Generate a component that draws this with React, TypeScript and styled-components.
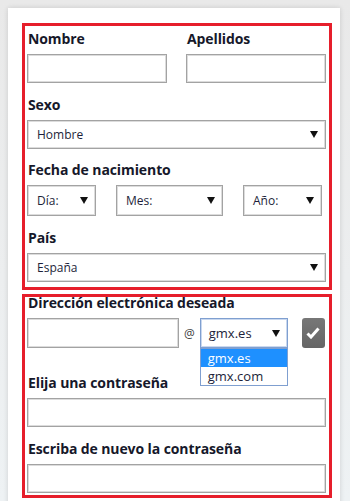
import React from "react";
import styled, { createGlobalStyle } from "styled-components";

const GlobalStyle = createGlobalStyle`
  html, body {
    margin: 0;
    padding: 0;
  }
  body {
    width: 350px;
    height: 501px;
    overflow: hidden;
    font-family: "Open Sans", "Noto Sans", sans-serif;
    background: linear-gradient(180deg, #e9e9e9 0%, #eceeef 55%, #eef2f4 100%);
  }
`;

const Page = styled.div`
  padding: 8px 10px 0 8px;
`;

const Card = styled.div`
  width: 332px;
  min-height: 500px;
  background: #fff;
  box-shadow: 0 0 5px rgba(0, 0, 0, 0.14);
  padding: 15px 8px 0 14px;
  box-sizing: border-box;
`;

const Section = styled.div<{ $pt: number; $pb: number; $mt?: number }>`
  border: 3px solid #e61e2b;
  padding: ${(p) => p.$pt}px 3px ${(p) => p.$pb}px 2px;
  margin-top: ${(p) => p.$mt ?? 0}px;
  position: relative;
`;

const Field = styled.div<{ $mt?: number }>`
  margin-top: ${(p) => p.$mt ?? 0}px;
`;

const Label = styled.div`
  font-size: 14px;
  line-height: 20px;
  font-weight: 700;
  color: #16182a;
  margin: 0 0 5px 1px;
  letter-spacing: -0.1px;
  white-space: nowrap;
`;

const Pair = styled.div`
  display: grid;
  grid-template-columns: 140px 140px;
  column-gap: 19px;
`;

const TextBox = styled.div<{ $w?: number; $h?: number }>`
  width: ${(p) => (p.$w ? `${p.$w}px` : "100%")};
  height: ${(p) => p.$h ?? 29}px;
  box-sizing: border-box;
  border: 1px solid #a3a3a3;
  box-shadow: inset 0 0 0 1px #dcdcdc;
  background: #fff;
`;

const Select = styled.div<{ $w?: number; $h?: number; $pl?: number; $focus?: boolean }>`
  width: ${(p) => (p.$w ? `${p.$w}px` : "100%")};
  height: ${(p) => p.$h ?? 29}px;
  box-sizing: border-box;
  border: 1px solid ${(p) => (p.$focus ? "#7f9fd0" : "#a3a3a3")};
  box-shadow: inset 0 0 0 1px ${(p) => (p.$focus ? "#c9d8ef" : "#dcdcdc")};
  background: #fff;
  display: flex;
  align-items: center;
  justify-content: space-between;
  padding: 0 7px 0 ${(p) => p.$pl ?? 9}px;
`;

const SelectText = styled.span<{ $size?: number }>`
  font-size: ${(p) => p.$size ?? 12}px;
  color: #1d1f3a;
`;

const DateRow = styled.div`
  display: flex;
  gap: 20px;
  align-items: center;
`;

const EmailRow = styled.div`
  display: flex;
  align-items: center;
  position: relative;
`;

const At = styled.span`
  font-size: 12px;
  color: #444;
  margin: 0 5px 0 5px;
`;

const DomainWrap = styled.div`
  position: relative;
`;

const DropList = styled.div`
  position: absolute;
  left: 0;
  top: 30px;
  width: 88px;
  box-sizing: border-box;
  border: 1px solid #7f9fd0;
  background: #fff;
  z-index: 2;
`;

const Option = styled.div<{ $active?: boolean }>`
  height: 18px;
  line-height: 18px;
  padding-left: 7px;
  font-size: 13px;
  color: ${(p) => (p.$active ? "#fff" : "#1d1f3a")};
  background: ${(p) => (p.$active ? "#1e90ff" : "#fff")};
`;

const CheckButton = styled.div`
  width: 23px;
  height: 30px;
  margin-left: 14px;
  border-radius: 3px;
  background: linear-gradient(180deg, #777 0%, #656565 100%);
  display: flex;
  align-items: center;
  justify-content: center;
`;

const Arrow = () => (
  <svg width="8" height="7" viewBox="0 0 8 7">
    <path d="M0 0 H8 L4 7 Z" fill="#111" />
  </svg>
);

const Check = () => (
  <svg width="14" height="12" viewBox="0 0 14 12">
    <path d="M1.5 6.5 L5 10 L12.5 1.5" fill="none" stroke="#fff" strokeWidth="3" />
  </svg>
);

export default function App() {
  return (
    <>
      <GlobalStyle />
      <Page>
        <Card>
          <Section $pt={3} $pb={5}>
            <Pair>
              <Field>
                <Label>Nombre</Label>
                <TextBox />
              </Field>
              <Field>
                <Label>Apellidos</Label>
                <TextBox />
              </Field>
            </Pair>
            <Field $mt={12}>
              <Label>Sexo</Label>
              <Select>
                <SelectText>Hombre</SelectText>
                <Arrow />
              </Select>
            </Field>
            <Field $mt={11}>
              <Label>Fecha de nacimiento</Label>
              <DateRow>
                <Select $w={69} $h={31}>
                  <SelectText>Día:</SelectText>
                  <Arrow />
                </Select>
                <Select $w={107} $h={31}>
                  <SelectText>Mes:</SelectText>
                  <Arrow />
                </Select>
                <Select $w={79} $h={31}>
                  <SelectText>Año:</SelectText>
                  <Arrow />
                </Select>
              </DateRow>
            </Field>
            <Field $mt={12}>
              <Label>País</Label>
              <Select>
                <SelectText>España</SelectText>
                <Arrow />
              </Select>
            </Field>
          </Section>

          <Section $pt={0} $pb={2} $mt={4}>
            <Field $mt={-4}>
              <Label>Dirección electrónica deseada</Label>
              <EmailRow>
                <TextBox $w={152} $h={30} />
                <At>@</At>
                <DomainWrap>
                  <Select $w={88} $h={30} $pl={8} $focus>
                    <SelectText $size={13}>gmx.es</SelectText>
                    <Arrow />
                  </Select>
                  <DropList>
                    <Option $active>gmx.es</Option>
                    <Option>gmx.com</Option>
                  </DropList>
                </DomainWrap>
                <CheckButton>
                  <Check />
                </CheckButton>
              </EmailRow>
            </Field>
            <Field $mt={25}>
              <Label>Elija una contraseña</Label>
              <TextBox />
            </Field>
            <Field $mt={12}>
              <Label>Escriba de nuevo la contraseña</Label>
              <TextBox />
            </Field>
          </Section>
        </Card>
      </Page>
    </>
  );
}
